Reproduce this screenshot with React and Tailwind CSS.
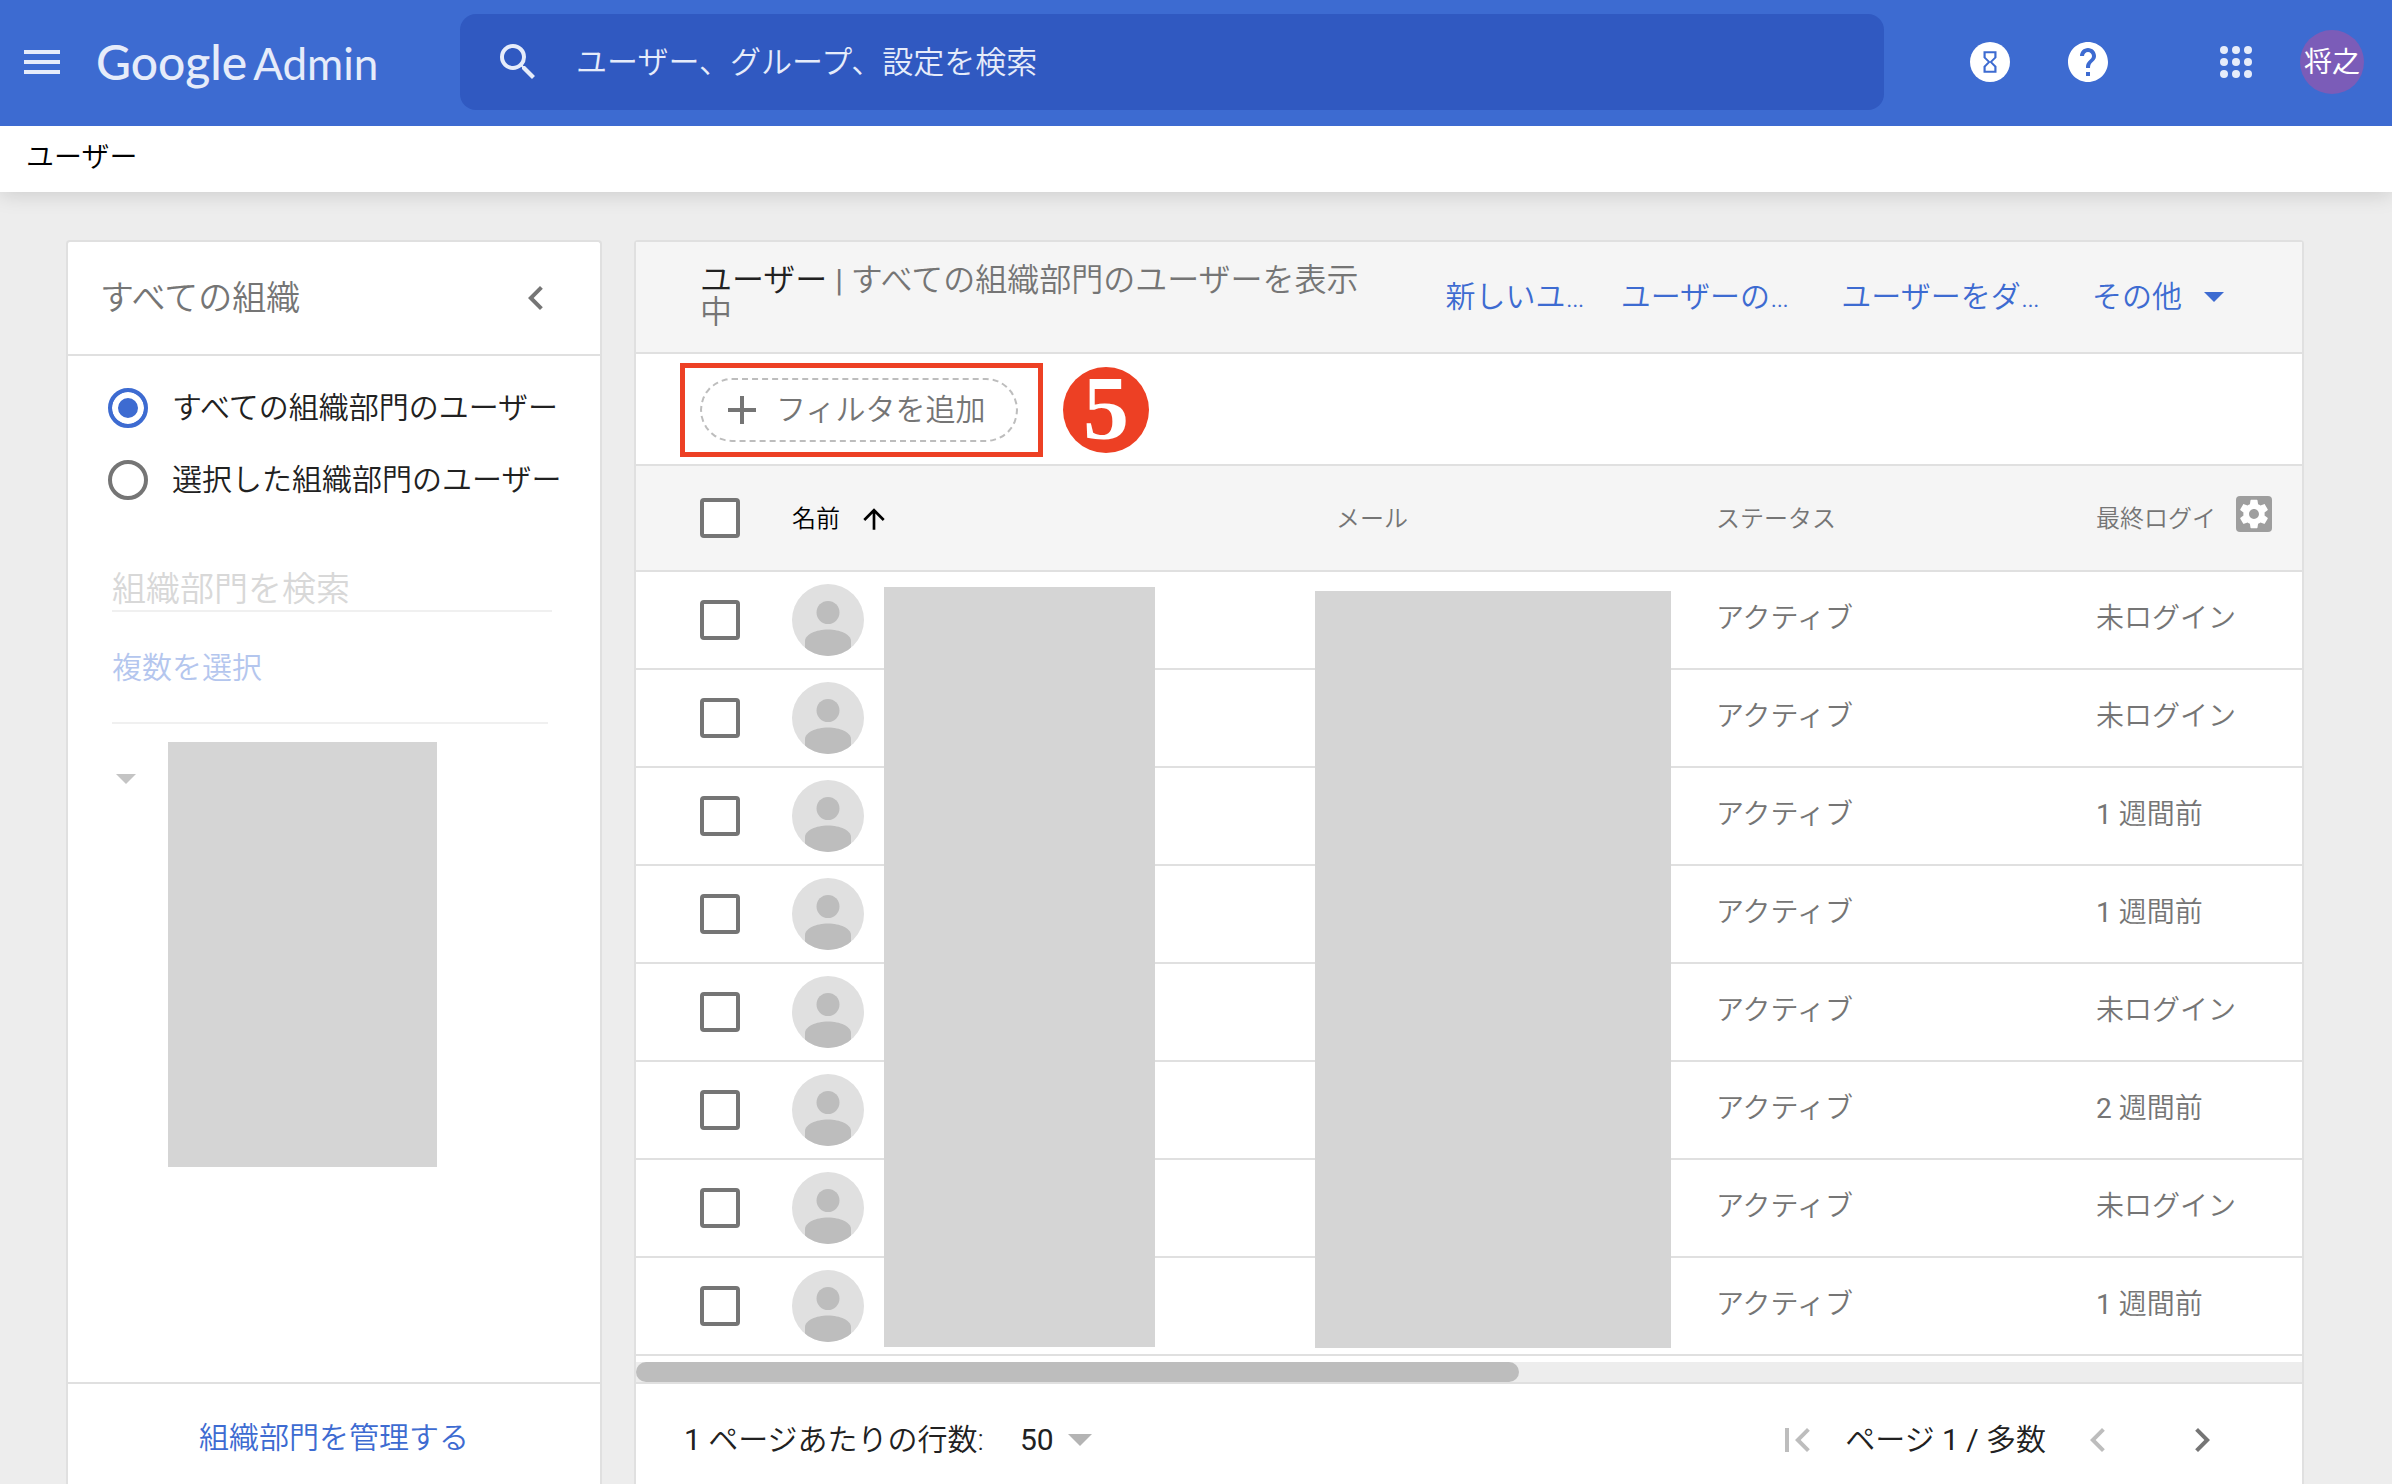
import React from "react";

const rows = [
  { login: "未ログイン" },
  { login: "未ログイン" },
  { count: 1, login: "週間前" },
  { count: 1, login: "週間前" },
  { login: "未ログイン" },
  { count: 2, login: "週間前" },
  { login: "未ログイン" },
  { count: 1, login: "週間前" },
];

function Icon({ d, className }) {
  return (
    <svg viewBox="0 0 24 24" fill="currentColor" className={className} aria-hidden="true">
      <path d={d} />
    </svg>
  );
}

const SEARCH =
  "M15.5 14h-.79l-.28-.27A6.47 6.47 0 0 0 16 9.5 6.5 6.5 0 1 0 9.5 16c1.61 0 3.09-.59 4.23-1.57l.27.28v.79l5 4.99L20.49 19l-4.99-5zm-6 0C7.01 14 5 11.99 5 9.5S7.01 5 9.5 5 14 7.01 14 9.5 11.99 14 9.5 14z";
const HOURGLASS =
  "M6 2v6h.01L6 8.01 10 12l-4 4 .01.01H6V22h12v-5.99h-.01L18 16l-4-4 4-3.99-.01-.01H18V2H6zm10 14.5V20H8v-3.5l4-4 4 4zm-4-5l-4-4V4h8v3.5l-4 4z";
const HELP =
  "M12 2C6.48 2 2 6.48 2 12s4.48 10 10 10 10-4.48 10-10S17.52 2 12 2zm1 17h-2v-2h2v2zm2.07-7.75l-.9.92C13.45 12.9 13 13.5 13 15h-2v-.5c0-1.1.45-2.1 1.17-2.83l1.24-1.26c.37-.36.59-.86.59-1.41 0-1.1-.9-2-2-2s-2 .9-2 2H8c0-2.21 1.79-4 4-4s4 1.79 4 4c0 .88-.36 1.68-.93 2.25z";
const GEAR =
  "M19.43 12.98c.04-.32.07-.64.07-.98s-.03-.66-.07-.98l2.11-1.65c.19-.15.24-.42.12-.64l-2-3.46c-.12-.22-.39-.3-.61-.22l-2.49 1c-.52-.4-1.08-.73-1.69-.98l-.38-2.65C14.46 2.18 14.25 2 14 2h-4c-.25 0-.46.18-.49.42l-.38 2.65c-.61.25-1.17.59-1.69.98l-2.49-1c-.23-.09-.49 0-.61.22l-2 3.46c-.13.22-.07.49.12.64l2.11 1.65c-.04.32-.07.65-.07.98s.03.66.07.98l-2.11 1.65c-.19.15-.24.42-.12.64l2 3.46c.12.22.39.3.61.22l2.49-1c.52.4 1.08.73 1.69.98l.38 2.65c.03.24.24.42.49.42h4c.25 0 .46-.18.49-.42l.38-2.65c.61-.25 1.17-.59 1.69-.98l2.49 1c.23.09.49 0 .61-.22l2-3.46c.12-.22.07-.49-.12-.64l-2.11-1.65zM12 15.5c-1.93 0-3.5-1.57-3.5-3.5s1.57-3.5 3.5-3.5 3.5 1.57 3.5 3.5-1.57 3.5-3.5 3.5z";
const LEFT = "M15.41 7.41L14 6l-6 6 6 6 1.41-1.41L10.83 12z";
const RIGHT = "M10 6L8.59 7.41 13.17 12l-4.58 4.59L10 18l6-6z";
const FIRST = "M18.41 16.59L13.82 12l4.59-4.59L17 6l-6 6 6 6zM6 6h2v12H6z";
const ARROW_UP = "M4 12l1.41 1.41L11 7.83V20h2V7.83l5.58 5.59L20 12l-8-8-8 8z";

function Triangle({ className }) {
  return (
    <svg viewBox="0 0 20 10" fill="currentColor" className={className} aria-hidden="true">
      <path d="M0 0h20L10 10z" />
    </svg>
  );
}

function Avatar() {
  return (
    <svg viewBox="0 0 72 72" className="block size-[72px] rounded-full" aria-hidden="true">
      <rect width="72" height="72" fill="#e0e0e0" />
      <circle cx="36" cy="28.500" r="11.500" fill="#bdbdbd" />
      <path d="M13 72V57c0-6.500 11-11.500 23-11.500S59 50.500 59 57v15z" fill="#bdbdbd" />
    </svg>
  );
}

function Check({ label }) {
  return (
    <input
      type="checkbox"
      aria-label={label}
      className="block size-10 appearance-none rounded border-4 border-[#757575] bg-white"
    />
  );
}

function Header() {
  return (
    <header className="relative z-10 flex h-[126px] items-center bg-[#3d6bd1] pb-0.5 text-[#e6ecfa]">
      <div className="flex w-[460px] shrink-0 items-center pl-6">
        <button aria-label="メインメニュー" className="flex w-9 flex-col gap-1.5">
          <span className="h-1 w-full bg-current" />
          <span className="h-1 w-full bg-current" />
          <span className="h-1 w-full bg-current" />
        </button>
        <a href="#" className="flex items-baseline gap-1.5 pl-9 font-[Lato] leading-[56px]">
          <span className="text-[48px] font-medium">Google</span>
          <span className="text-[44px] font-normal">Admin</span>
        </a>
      </div>
      <label className="flex h-24 min-w-0 flex-1 items-center rounded-2xl bg-[#3059c1] pl-8.5">
        <Icon d={SEARCH} className="size-12 shrink-0" />
        <input
          type="search"
          aria-label="検索"
          placeholder="ユーザー、グループ、設定を検索"
          className="ml-8.5 h-12 min-w-0 flex-1 bg-transparent text-[31px] outline-none placeholder:text-[#e6ecfa]"
        />
      </label>
      <div className="flex w-[508px] shrink-0 items-center justify-end pr-7 text-white">
        <button aria-label="タスク" className="mr-[54px] flex size-10 items-center justify-center rounded-full bg-white text-[#3d6bd1]">
          <Icon d={HOURGLASS} className="size-[26px]" />
        </button>
        <button aria-label="ヘルプ" className="mr-[108px]">
          <Icon d={HELP} className="size-12" />
        </button>
        <button aria-label="アプリ" className="mr-12">
          <svg viewBox="0 0 32 32" className="size-8" fill="#e6ecfa" aria-hidden="true">
            {[4, 16, 28].map((y) => [4, 16, 28].map((x) => <circle key={x + "-" + y} cx={x} cy={y} r="4" />))}
          </svg>
        </button>
        <button className="flex size-16 items-center justify-center rounded-full bg-[#7b5cb8] pt-0.5 text-[28px] leading-8 font-normal text-white">
          将之
        </button>
      </div>
    </header>
  );
}

function OrgPanel() {
  return (
    <aside className="flex w-[536px] shrink-0 flex-col rounded-t border-x-2 border-t-2 border-[#e0e0e0] bg-white">
      <div className="flex h-[114px] items-center justify-between border-b-2 border-[#e0e0e0] pr-10 pl-8">
        <h2 className="text-[34px] leading-10 text-[#757575]">すべての組織</h2>
        <button aria-label="閉じる" className="text-[#757575]">
          <Icon d={LEFT} className="size-12" />
        </button>
      </div>
      <div className="flex flex-1 flex-col pr-12 pl-11">
        <div className="-ml-1 mt-8 flex flex-col gap-8 text-[30px] leading-10 text-[#212121]">
          <label className="flex items-center gap-6 whitespace-nowrap">
            <input
              type="radio"
              name="scope"
              defaultChecked
              className="size-10 shrink-0 appearance-none rounded-full border-4 border-[#757575] checked:border-[#3d6bd1] checked:bg-[#3d6bd1] checked:shadow-[inset_0_0_0_6px_white]"
            />
            すべての組織部門のユーザー
          </label>
          <label className="flex items-center gap-6 whitespace-nowrap">
            <input
              type="radio"
              name="scope"
              className="size-10 shrink-0 appearance-none rounded-full border-4 border-[#757575] checked:border-[#3d6bd1] checked:bg-[#3d6bd1] checked:shadow-[inset_0_0_0_6px_white]"
            />
            選択した組織部門のユーザー
          </label>
        </div>
        <input
          type="text"
          aria-label="組織部門を検索"
          placeholder="組織部門を検索"
          className="mt-16 h-12 w-full border-b-2 border-[#f0f0f0] pt-1 text-[34px] leading-10 outline-none placeholder:text-[#d8d8d8]"
        />
        <div className="mr-1 border-b-2 border-[#f0f0f0] pt-9 pb-8.5">
          <button className="block text-[30px] leading-10 text-[#b4c6ee]">複数を選択</button>
        </div>
        <div className="flex pt-4.5">
          <button aria-label="展開" className="mt-8 mr-8 ml-1 self-start text-[#c4c4c4]">
            <Triangle className="h-2.5 w-5" />
          </button>
          <div className="h-[425px] w-[269px] bg-[#d5d5d5]" />
        </div>
      </div>
      <div className="flex h-[102px] justify-center border-t-2 border-[#e0e0e0] pt-8.5">
        <a href="#" className="text-[30px] leading-10 text-[#3d6bd1]">組織部門を管理する</a>
      </div>
    </aside>
  );
}

function UsersPanel() {
  return (
    <section className="flex min-w-0 flex-1 flex-col rounded-t border-x-2 border-t-2 border-[#e0e0e0] bg-white">
      <div className="flex h-28 justify-between border-b-2 border-[#e0e0e0] bg-[#f5f5f5] pr-[78px] pl-16">
        <h1 className="w-[672px] shrink-0 pt-5.5 text-[32px] leading-8 text-[#757575]">
          <span className="text-[#212121]">ユーザー</span> <span className="font-normal">|</span> すべての組織部門のユーザーを表示中
        </h1>
        <div className="flex items-center gap-13 text-[30px] leading-10 whitespace-nowrap text-[#3d6bd1]">
          <button className="-mr-4">新しいユ…</button>
          <button>ユーザーの…</button>
          <button>ユーザーをダ…</button>
          <button className="flex items-center gap-5.5">
            その他
            <Triangle className="h-2.5 w-5" />
          </button>
        </div>
      </div>
      <div className="flex h-28 items-center gap-5 border-b-2 border-[#e0e0e0] pt-0.5 pl-11">
        <div className="border-[5px] border-[#ed4024] py-2.5 pr-5 pl-[15px]">
          <button className="flex h-16 w-[318px] items-center rounded-full border-2 border-dashed border-[#bdbdbd] pl-[26px] text-[30px] leading-10 whitespace-nowrap text-[#757575]">
            <svg viewBox="0 0 28 28" className="mr-5 size-7 shrink-0" stroke="currentColor" strokeWidth="4" aria-hidden="true">
              <path d="M14 0v28M0 14h28" />
            </svg>
            フィルタを追加
          </button>
        </div>
        <div className="flex size-[86px] items-center justify-center rounded-full bg-[#ed4024] pb-1 font-['Liberation_Serif'] text-[92px] leading-[86px] font-bold text-white">
          5
        </div>
      </div>
      <div className="relative">
        <table className="w-full table-fixed border-separate border-spacing-0 text-left text-[28px] leading-9 text-[#757575]">
          <thead className="bg-[#f5f5f5] text-2xl leading-8">
            <tr>
              <th className="h-[106px] w-[156px] border-b-2 border-[#e0e0e0] pl-16">
                <Check label="すべて選択" />
              </th>
              <th className="w-[544px] border-b-2 border-[#e0e0e0] pt-0.5 font-[350] text-black">
                <button className="flex items-center gap-4.5">
                  名前
                  <Icon d={ARROW_UP} className="size-8" />
                </button>
              </th>
              <th className="w-[380px] border-b-2 border-[#e0e0e0] pt-0.5 font-[350]">メール</th>
              <th className="w-[380px] border-b-2 border-[#e0e0e0] pt-0.5 font-[350]">ステータス</th>
              <th className="border-b-2 border-[#e0e0e0] pt-0.5 font-[350]">
                <div className="flex items-center justify-between pr-[30px] whitespace-nowrap">
                  最終ログイ
                  <button aria-label="列の設定" className="mb-2.5 flex size-9 items-center justify-center rounded bg-[#9e9e9e] text-white">
                    <Icon d={GEAR} className="size-[34px]" />
                  </button>
                </div>
              </th>
            </tr>
          </thead>
          <tbody>
            {rows.map(({ count, login }, i) => (
              <tr key={i}>
                <td className="h-[98px] border-b-2 border-[#e0e0e0] pl-16">
                  <Check label={"行 " + (i + 1) + " を選択"} />
                </td>
                <td className="border-b-2 border-[#e0e0e0]">
                  <Avatar />
                </td>
                <td className="border-b-2 border-[#e0e0e0]" />
                <td className="border-b-2 border-[#e0e0e0] pb-0.5">アクティブ</td>
                <td className="border-b-2 border-[#e0e0e0] pb-0.5 whitespace-nowrap">
                  {count && <span className="font-normal">{count} </span>}
                  {login}
                </td>
              </tr>
            ))}
          </tbody>
        </table>
        {/* Masks over the private name and mail columns */}
        <div className="absolute top-[121px] bottom-[9px] left-[248px] w-[271px] bg-[#d5d5d5]" />
        <div className="absolute top-[125px] bottom-2 left-[679px] w-[356px] bg-[#d5d5d5]" />
      </div>
      <div className="mt-1.5 h-5 bg-[#ededed]">
        <div className="h-full w-[53%] rounded-full bg-[#bdbdbd]" />
      </div>
      <div className="flex flex-1 items-start justify-between border-t-2 border-[#e0e0e0] pt-9 pr-[76px] pb-6 pl-12 text-[30px] leading-10 whitespace-nowrap text-[#212121]">
        <div className="flex items-center">
          <label htmlFor="rows-per-page">
            <span className="font-normal">1</span> ページあたりの行数:
          </label>
          <div className="relative ml-9 flex items-center">
            <select id="rows-per-page" defaultValue="50" className="h-10 w-[72px] appearance-none bg-transparent leading-10 font-normal">
              <option>50</option>
            </select>
            <Triangle className="pointer-events-none absolute right-0 h-3 w-6 text-[#b4b4b4]" />
          </div>
        </div>
        <div className="flex h-10 items-center">
          <button aria-label="最初のページ" className="mr-6 text-[#bdbdbd]">
            <Icon d={FIRST} className="size-12" />
          </button>
          <span>
            ページ <span className="font-normal">1 /</span> 多数
          </span>
          <button aria-label="前のページ" className="ml-7 text-[#bdbdbd]">
            <Icon d={LEFT} className="size-12" />
          </button>
          <button aria-label="次のページ" className="ml-14 text-[#757575]">
            <Icon d={RIGHT} className="size-12" />
          </button>
        </div>
      </div>
    </section>
  );
}

export default function App() {
  return (
    <div
      lang="ja"
      className="flex min-h-screen flex-col bg-[#ededed] font-[Roboto,'Noto_Sans_CJK_JP',sans-serif] font-[350]"
    >
      <Header />
      <nav className="relative flex h-[66px] items-center bg-white pb-0.5 pl-[26px] text-[28px] leading-10 text-black shadow-[0_2px_20px_rgba(0,0,0,0.15)]">
        ユーザー
      </nav>
      <main className="flex flex-1 gap-8 pt-12 pr-[88px] pl-[66px]">
        <OrgPanel />
        <UsersPanel />
      </main>
    </div>
  );
}
